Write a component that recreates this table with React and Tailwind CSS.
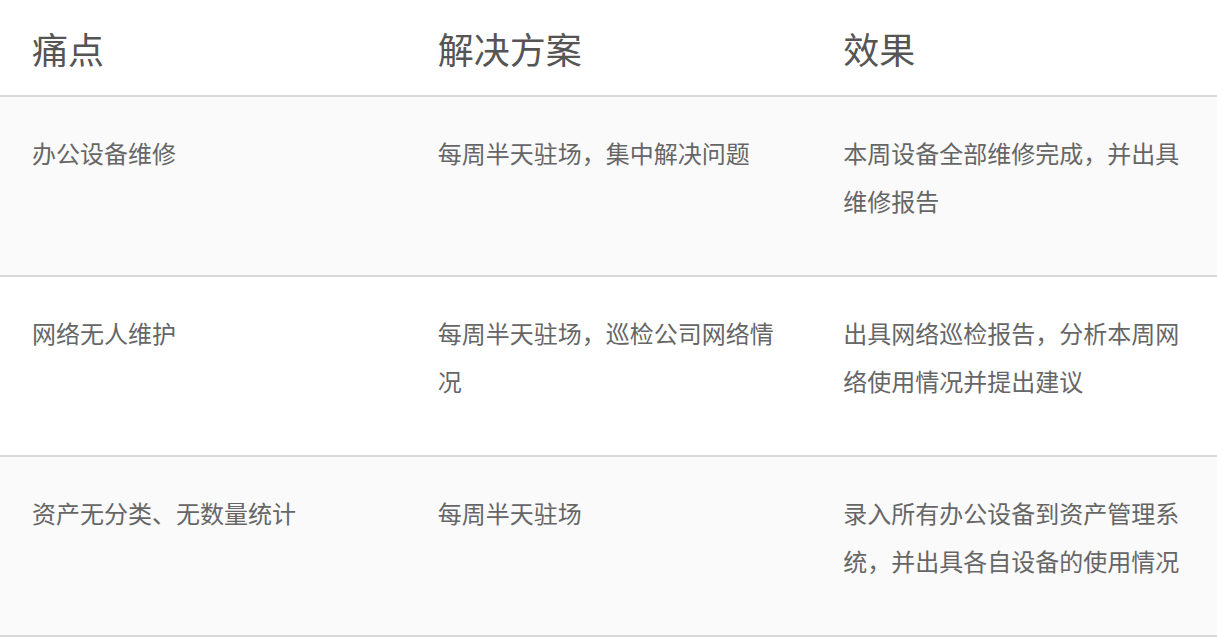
const rows = [
  {
    pain: "办公设备维修",
    solution: "每周半天驻场，集中解决问题",
    effect: "本周设备全部维修完成，并出具维修报告",
  },
  {
    pain: "网络无人维护",
    solution: "每周半天驻场，巡检公司网络情况",
    effect: "出具网络巡检报告，分析本周网络使用情况并提出建议",
  },
  {
    pain: "资产无分类、无数量统计",
    solution: "每周半天驻场",
    effect: "录入所有办公设备到资产管理系统，并出具各自设备的使用情况",
  },
];

const headers = ["痛点", "解决方案", "效果"];

export default function App() {
  return (
    <div
      className="w-[1217px] min-h-[638px] bg-white text-[#666]"
      style={{ fontFamily: '"Noto Sans CJK SC", "Noto Sans", sans-serif' }}
    >
      <div className="grid grid-cols-3 h-[97px] border-b-2 border-[#d9d9d9]">
        {headers.map((h) => (
          <div key={h} className="flex items-center pl-8 text-[36px] leading-none text-[#555]">
            {h}
          </div>
        ))}
      </div>

      {rows.map((row, i) => (
        <div
          key={row.pain}
          className={
            "grid grid-cols-3 h-[180px] border-b-2 border-[#d9d9d9] " +
            (i % 2 === 0 ? "bg-[#fafafa]" : "bg-white")
          }
        >
          {[row.pain, row.solution, row.effect].map((text, j) => (
            <div key={j} className="pl-8 pr-8 pt-[32px] text-[24px] leading-[48px]">
              {text}
            </div>
          ))}
        </div>
      ))}
    </div>
  );
}
